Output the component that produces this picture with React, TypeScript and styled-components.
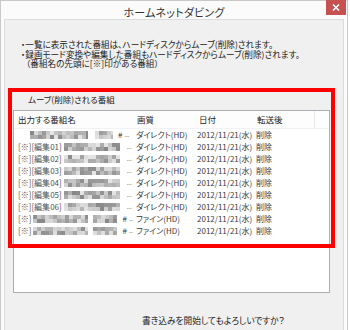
import React from "react";
import styled, { createGlobalStyle } from "styled-components";

const Global = createGlobalStyle`
  html, body { margin: 0; padding: 0; background: #ffffff; }
  body {
    font-family: "Noto Sans CJK JP", "Noto Sans", sans-serif;
    font-feature-settings: "palt";
    color: #1e1e1e;
  }
`;

const Window = styled.div`
  width: 348px;
  height: 330px;
  box-sizing: border-box;
  border: 1px solid #c9c9c9;
  border-bottom: none;
  background: #fbfbfb;
  padding: 0 3px;
  display: flex;
  flex-direction: column;
`;

const TitleBar = styled.div`
  height: 18px;
  flex: none;
  display: grid;
  grid-template-columns: 1fr auto 1fr;
  align-items: start;
`;

const Title = styled.div`
  grid-column: 2;
  font-size: 11px;
  line-height: 11px;
  margin-top: 6px;
  color: #333;
  letter-spacing: 0.2px;
  white-space: nowrap;
`;

const CloseSlot = styled.div`
  grid-column: 3;
  display: flex;
  justify-content: flex-end;
  margin-right: -2px;
  margin-top: -1px;
  position: relative;
  z-index: 5;
`;

const CloseButton = styled.div`
  width: 20px;
  height: 15px;
  background-color: #c75050;
  box-shadow: inset 0 0 0 10px #c75050;
  line-height: 0;
`;

const Client = styled.div`
  flex: 1;
  position: relative;
  border: 1px solid #dcdcdc;
  border-bottom: none;
  background: #f0f0f0;
  display: flex;
  flex-direction: column;
  padding: 0 0 0 8px;
`;

const Notice = styled.div`
  margin: 20px 0 0 8px;
  font-size: 8.6px;
  line-height: 9.5px;
  color: #222;
`;

const NoticeLine = styled.div<{ $indent?: number }>`
  padding-left: ${(p) => p.$indent ?? 0}px;
  white-space: nowrap;
`;

const GroupLabel = styled.div`
  margin: 25px 0 0 15px;
  font-size: 8.5px;
  line-height: 10px;
  color: #222;
`;

const List = styled.div`
  margin-top: 6px;
  width: 317px;
  height: 183px;
  box-sizing: border-box;
  border: 1px solid #abadb3;
  background: #ffffff;
  font-size: 8px;
  color: #3a3a3a;
`;

const cols = "119px 62px 58px 62px 1fr";

const HeaderRow = styled.div`
  display: grid;
  grid-template-columns: ${cols};
  height: 17px;
  align-items: center;
  background: #fdfdfd;
  border-bottom: 1px solid #f0f2f5;
  font-size: 8.5px;
`;

const HeaderCell = styled.div<{ $divider?: boolean }>`
  height: 100%;
  display: flex;
  align-items: center;
  padding-left: 4px;
  box-sizing: border-box;
  border-right: 1px solid ${(p) => (p.$divider ? "#e6e9ee" : "transparent")};
  color: #222;
  white-space: nowrap;
`;

const Row = styled.div`
  display: grid;
  grid-template-columns: ${cols};
  height: 12px;
  align-items: center;
`;

const Cell = styled.div<{ $pad?: number }>`
  padding-left: ${(p) => p.$pad ?? 3}px;
  white-space: nowrap;
  overflow: hidden;
  display: flex;
  align-items: center;
  line-height: 12px;
`;

const NameCell = styled(Cell)`
  padding-left: 4px;
  gap: 2px;
`;

const Prefix = styled.span`
  color: #505050;
`;

const Mosaic = styled.span<{ $w: number; $ml?: number }>`
  display: inline-grid;
  grid-auto-flow: column;
  grid-template-rows: 4px 4px;
  width: ${(p) => p.$w}px;
  margin-left: ${(p) => p.$ml ?? 0}px;
  overflow: hidden;
  flex: none;
`;

const Block = styled.span`
  width: 4px;
  height: 4px;
`;

const Tail = styled.span<{ $ml?: number }>`
  margin-left: ${(p) => p.$ml ?? 0}px;
  color: #333;
`;

const Dots = styled.span<{ $ml?: number }>`
  margin-left: ${(p) => p.$ml ?? 0}px;
  font-size: 5px;
  line-height: 12px;
  padding-top: 3px;
  color: #444;
`;

const Question = styled.div`
  margin: 23px 0 0 129px;
  font-size: 8.7px;
  line-height: 10px;
  color: #222;
  white-space: nowrap;
`;

const Highlight = styled.div`
  position: absolute;
  left: 3px;
  top: 68px;
  width: 327px;
  height: 160px;
  box-sizing: border-box;
  border: 4px solid #ff0000;
  pointer-events: none;
`;

function seeded(seed: number) {
  let s = (seed * 7919 + 104729) % 233280;
  return () => {
    s = (s * 9301 + 49297) % 233280;
    return s / 233280;
  };
}

function MosaicBar({ width, seed, ml }: { width: number; seed: number; ml?: number }) {
  const rnd = seeded(seed);
  const count = Math.ceil(width / 4) * 2;
  const blocks = Array.from({ length: count }, () => {
    const v = Math.round(135 + rnd() * 95);
    return `rgb(${v},${v},${v})`;
  });
  return (
    <Mosaic $w={width} $ml={ml}>
      {blocks.map((c, i) => (
        <Block key={i} style={{ backgroundColor: c }} />
      ))}
    </Mosaic>
  );
}

type RowData = {
  kind: "plain" | "edit" | "fine";
  n?: string;
  quality: string;
};

const rows: RowData[] = [
  { kind: "plain", quality: "ダイレクト(HD)" },
  { kind: "edit", n: "01", quality: "ダイレクト(HD)" },
  { kind: "edit", n: "02", quality: "ダイレクト(HD)" },
  { kind: "edit", n: "03", quality: "ダイレクト(HD)" },
  { kind: "edit", n: "04", quality: "ダイレクト(HD)" },
  { kind: "edit", n: "05", quality: "ダイレクト(HD)" },
  { kind: "edit", n: "06", quality: "ダイレクト(HD)" },
  { kind: "fine", quality: "ファイン(HD)" },
  { kind: "fine", quality: "ファイン(HD)" },
];

function NameContent({ r, i }: { r: RowData; i: number }) {
  if (r.kind === "plain") {
    return (
      <>
        <MosaicBar width={58} seed={i + 3} ml={12} />
        <MosaicBar width={18} seed={i + 11} ml={5} />
        <Tail $ml={3}>#</Tail>
        <Dots>…</Dots>
      </>
    );
  }
  if (r.kind === "edit") {
    return (
      <>
        <Prefix>[※][編集{r.n}]</Prefix>
        <MosaicBar width={56} seed={i + 5} />
        <Dots $ml={5}>…</Dots>
      </>
    );
  }
  return (
    <>
      <Prefix>[※]</Prefix>
      <MosaicBar width={55} seed={i + 7} />
      <MosaicBar width={24} seed={i + 17} ml={3} />
      <Tail $ml={3}>#</Tail>
      <Dots>…</Dots>
    </>
  );
}

export default function App() {
  return (
    <>
      <Global />
      <Window>
        <TitleBar>
          <Title>ホームネットダビング</Title>
          <CloseSlot>
            <CloseButton>
              <svg width="20" height="15" viewBox="0 0 20 15">
                <rect x="0" y="0" width="20" height="15" fill="#c75050" />
                <path d="M7 4.5 L13 10.5 M13 4.5 L7 10.5" stroke="#ffffff" strokeWidth="1.7" />
              </svg>
            </CloseButton>
          </CloseSlot>
        </TitleBar>
        <Client>
          <Notice>
            <NoticeLine>・一覧に表示された番組は、ハードディスクからムーブ(削除)されます。</NoticeLine>
            <NoticeLine>・録画モード変換や編集した番組もハードディスクからムーブ(削除)されます。</NoticeLine>
            <NoticeLine $indent={5}>（番組名の先頭に[※]印がある番組）</NoticeLine>
          </Notice>
          <GroupLabel>ムーブ(削除)される番組</GroupLabel>
          <List>
            <HeaderRow>
              <HeaderCell>出力する番組名</HeaderCell>
              <HeaderCell>画質</HeaderCell>
              <HeaderCell>日付</HeaderCell>
              <HeaderCell $divider>転送後</HeaderCell>
              <HeaderCell />
            </HeaderRow>
            {rows.map((r, i) => (
              <Row key={i}>
                <NameCell>
                  <NameContent r={r} i={i} />
                </NameCell>
                <Cell>{r.quality}</Cell>
                <Cell $pad={2}>2012/11/21(水)</Cell>
                <Cell $pad={3}>削除</Cell>
                <Cell />
              </Row>
            ))}
          </List>
          <Question>書き込みを開始してもよろしいですか？</Question>
          <Highlight />
        </Client>
      </Window>
    </>
  );
}
